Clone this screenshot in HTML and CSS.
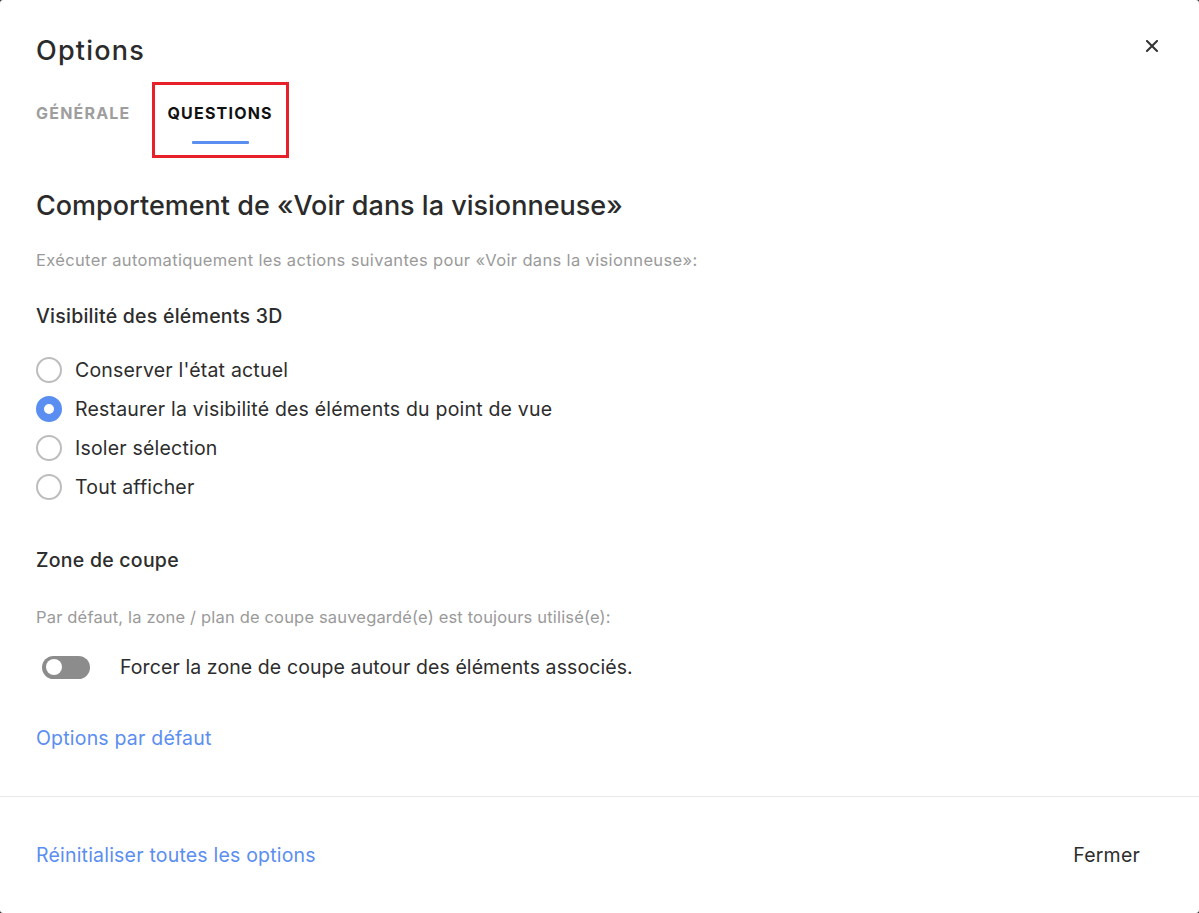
FILE: index.html
```html
<!DOCTYPE html>
<html lang="fr">
<head>
<meta charset="utf-8">
<title>Options</title>
<link rel="stylesheet" href="styles.css">
</head>
<body>
<div class="modal">
  <div class="header">
    <h1 class="title">Options</h1>
    <button class="close" aria-label="Fermer">
      <svg width="12" height="12" viewBox="0 0 12 12"><path d="M1 1 L11 11 M11 1 L1 11" stroke="#333" stroke-width="2" stroke-linecap="square" fill="none"/></svg>
    </button>
  </div>
  <div class="tabs">
    <div class="tab">GÉNÉRALE</div>
    <div class="tab active highlight">QUESTIONS</div>
  </div>
  <div class="content">
    <h2 class="heading">Comportement de «Voir dans la visionneuse»</h2>
    <p class="hint hint-first">Exécuter automatiquement les actions suivantes pour «Voir dans la visionneuse»:</p>
    <h3 class="section">Visibilité des éléments 3D</h3>
    <div class="radios">
      <div class="radio-row"><span class="radio"></span><span class="label">Conserver l'état actuel</span></div>
      <div class="radio-row"><span class="radio checked"></span><span class="label">Restaurer la visibilité des éléments du point de vue</span></div>
      <div class="radio-row"><span class="radio"></span><span class="label">Isoler sélection</span></div>
      <div class="radio-row"><span class="radio"></span><span class="label">Tout afficher</span></div>
    </div>
    <h3 class="section section-zone">Zone de coupe</h3>
    <p class="hint hint-zone">Par défaut, la zone / plan de coupe sauvegardé(e) est toujours utilisé(e):</p>
    <div class="toggle-row">
      <span class="toggle"><span class="knob"></span></span>
      <span class="label toggle-label">Forcer la zone de coupe autour des éléments associés.</span>
    </div>
    <a class="link defaults" href="#">Options par défaut</a>
  </div>
  <div class="footer">
    <a class="link" href="#">Réinitialiser toutes les options</a>
    <span class="close-text">Fermer</span>
  </div>
</div>
</body>
</html>
```

FILE: styles.css
```css
* { box-sizing: border-box; }
html, body { margin: 0; padding: 0; }
body {
  background: #2a2a2a;
  font-family: "Inter", "Open Sans", sans-serif;
  color: #2d2d2d;
}
.modal {
  width: 1199px;
  height: 913px;
  background: #fff;
  border-radius: 3px;
  display: flex;
  flex-direction: column;
}
.header {
  display: flex;
  justify-content: space-between;
  align-items: flex-start;
  padding: 35px 41px 0 36px;
}
.title {
  margin: 0;
  font-size: 27px;
  line-height: 32px;
  font-weight: 500;
  letter-spacing: 1.2px;
  color: #2b2b2b;
}
.close {
  border: 0;
  background: none;
  padding: 0;
  margin-top: 5px;
  width: 12px;
  height: 12px;
  display: flex;
}
.tabs {
  display: flex;
  gap: 22px;
  padding-left: 36px;
  margin-top: 15px;
}
.tab {
  border: 3px solid transparent;
  padding: 18px 0 11px;
  font-size: 16px;
  line-height: 20px;
  font-weight: 700;
  letter-spacing: 1.2px;
  color: #9e9e9e;
  display: flex;
  flex-direction: column;
  align-items: center;
}
.tab:first-child { border-left: 0; border-right: 0; }
.tab.active { color: #111; padding-left: 12px; padding-right: 13px; }
.tab.active::after {
  content: "";
  display: block;
  width: 57px;
  height: 3px;
  margin-top: 18px;
  background: #5a8ef0;
  border-radius: 1px;
}
.tab:not(.active)::after {
  content: "";
  display: block;
  height: 3px;
  margin-top: 18px;
}
.highlight { border-color: #e8202a; }
.content {
  flex: 1;
  padding: 0 36px;
  display: flex;
  flex-direction: column;
  align-items: flex-start;
}
.heading {
  margin: 32px 0 0;
  font-size: 27px;
  line-height: 32px;
  font-weight: 500;
  color: #2b2b2b;
}
.hint {
  margin: 0;
  font-size: 16.5px;
  line-height: 20px;
  letter-spacing: 0.35px;
  color: #9a9a9a;
}
.hint-first { margin-top: 28px; }
.section {
  margin: 34px 0 0;
  font-size: 19.5px;
  line-height: 24px;
  letter-spacing: 0.25px;
  font-weight: 500;
  color: #2d2d2d;
}
.radios {
  margin-top: 22px;
  display: flex;
  flex-direction: column;
}
.radio-row {
  height: 39px;
  display: flex;
  align-items: center;
  gap: 13px;
}
.radio {
  width: 26px;
  height: 26px;
  border-radius: 50%;
  border: 2px solid #bdbdbd;
  background: #fff;
}
.radio.checked {
  border: 8px solid #5a8ef0;
}
.label {
  font-size: 19.5px;
  line-height: 24px;
  letter-spacing: 0.2px;
  color: #2d2d2d;
}
.section-zone { margin-top: 42px; }
.hint-zone { margin-top: 35px; letter-spacing: 0.17px; }
.toggle-row {
  margin-top: 28px;
  display: flex;
  align-items: center;
  gap: 30px;
  padding-left: 6px;
}
.toggle-label { letter-spacing: 0.09px; }
.toggle {
  width: 48px;
  height: 23px;
  border-radius: 12px;
  background: #8c8c8c;
  display: flex;
  align-items: center;
  padding-left: 4px;
}
.knob {
  width: 16px;
  height: 16px;
  border-radius: 50%;
  background: #fff;
}
.link {
  color: #5a8ef0;
  text-decoration: none;
  font-size: 19.5px;
  line-height: 24px;
  letter-spacing: 0.2px;
}
.defaults { margin-top: 47px; }
.footer {
  height: 117px;
  border-top: 1px solid #e8e8e8;
  display: flex;
  justify-content: space-between;
  align-items: center;
  padding: 0 59px 0 36px;
}
.close-text {
  font-size: 19.5px;
  line-height: 24px;
  letter-spacing: 0.2px;
  color: #2d2d2d;
}
```
